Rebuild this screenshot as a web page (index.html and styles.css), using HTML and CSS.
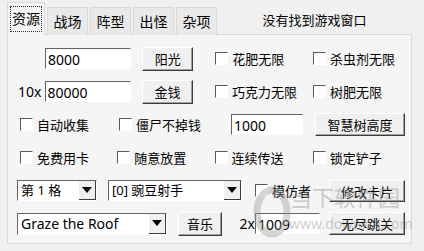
FILE: index.html
```html
<!DOCTYPE html>
<html lang="zh-CN">
<head>
    <meta charset="UTF-8">
    <meta name="viewport" content="width=device-width, initial-scale=1.0">
    <link rel="stylesheet" href="styles.css">
</head>
<body>

    <div class="window">
        <!-- Вкладки и статус -->
        <div class="topbar">
            <div class="tabs">
                <div class="tab active"><span class="focus">资源</span></div>
                <div class="tab">战场</div>
                <div class="tab">阵型</div>
                <div class="tab">出怪</div>
                <div class="tab">杂项</div>
            </div>
            <div class="status">没有找到游戏窗口</div>
        </div>

        <div class="panel">
            <div class="row">
                <div class="field f-money">8000</div>
                <div class="button b-small">阳光</div>
                <label class="check c-first"><span class="box"></span>花肥无限</label>
                <label class="check"><span class="box"></span>杀虫剂无限</label>
            </div>
            <div class="row">
                <span class="prefix p-10x">10x</span>
                <div class="field f-money">80000</div>
                <div class="button b-small">金钱</div>
                <label class="check c-first"><span class="box"></span>巧克力无限</label>
                <label class="check"><span class="box"></span>树肥无限</label>
            </div>
            <div class="row">
                <label class="check c-left"><span class="box"></span>自动收集</label>
                <label class="check c-left"><span class="box"></span>僵尸不掉钱</label>
                <div class="field f-tree">1000</div>
                <div class="button b-tree">智慧树高度</div>
            </div>
            <div class="row">
                <label class="check c-left"><span class="box"></span>免费用卡</label>
                <label class="check c-left"><span class="box"></span>随意放置</label>
                <label class="check"><span class="box"></span>连续传送</label>
                <label class="check"><span class="box"></span>锁定铲子</label>
            </div>
            <div class="row">
                <div class="combo cb-slot"><span class="value">第 1 格</span><span class="arrow"></span></div>
                <div class="combo cb-plant"><span class="value">[0] 豌豆射手</span><span class="arrow"></span></div>
                <label class="check c-imitate"><span class="box"></span>模仿者</label>
                <div class="button b-wide">修改卡片</div>
            </div>
            <div class="row">
                <div class="combo cb-music"><span class="value">Graze the Roof</span><span class="arrow"></span></div>
                <div class="button b-music">音乐</div>
                <span class="prefix p-2x">2x</span>
                <div class="field f-level">1009</div>
                <div class="button b-wide b-last">无尽跳关</div>
            </div>
        </div>

        <!-- Водяной знак -->
        <div class="watermark">
            <svg class="wm-logo" width="40" height="56" viewBox="0 0 40 56">
                <ellipse cx="20" cy="30" rx="15" ry="22" fill="none" stroke="#9a9a9a" stroke-width="7"/>
            </svg>
            <div class="wm-title">当下软件园</div>
            <div class="wm-url">www.downxia.com</div>
        </div>
    </div>

</body>
</html>
```

FILE: styles.css
```css
body {
    margin: 0;
    background-color: #f0f0f0;
    font-family: "Noto Sans", "Noto Sans CJK SC", sans-serif;
    font-size: 13px;
    color: #000;
}
.window {
    position: relative;
    width: 424px;
    height: 251px;
    padding: 3px 12px 0 7px;
    box-sizing: border-box;
}
/* Вкладки */
.topbar {
    display: flex;
    align-items: flex-end;
    height: 31px;
}
.tabs {
    display: flex;
    align-items: flex-end;
    gap: 2px;
    margin-bottom: -1px;
    position: relative;
    z-index: 2;
}
.tab {
    height: 27px;
    line-height: 27px;
    padding: 0 4px;
    width: 31px;
    text-align: center;
    background: #e9e9e9;
    border: 1px solid #dadada;
    border-bottom: none;
    font-size: 14px;
}
.tab.active {
    height: 32px;
    width: 32px;
    background: #f5f5f5;
    padding: 0 2px;
    display: flex;
    align-items: center;
    justify-content: center;
}
.tab .focus {
    display: block;
    line-height: 24px;
    padding: 0 1px;
    border: 1px dotted #333;
}
.status {
    flex: 1;
    align-self: center;
    text-align: center;
    padding-top: 2px;
}
/* Страница */
.panel {
    position: relative;
    height: 210px;
    border: 1px solid #d9d9d9;
    background: #f5f5f5;
    padding: 7px 0 0 9px;
    box-sizing: border-box;
}
.row {
    display: flex;
    align-items: center;
    height: 33px;
}
.field {
    height: 21px;
    line-height: 21px;
    padding-left: 2px;
    box-sizing: border-box;
    background: #fff;
    border: 1px solid;
    border-color: #646464 #fff #fff #646464;
    font-size: 14px;
}
.button {
    height: 24px;
    line-height: 22px;
    text-align: center;
    box-sizing: border-box;
    background: #f0f0f0;
    border: 1px solid;
    border-color: #fff #3c3c3c #3c3c3c #fff;
    box-shadow: inset -1px -1px #a0a0a0;
}
.check {
    display: flex;
    align-items: center;
    width: 100px;
}
.box {
    width: 11px;
    height: 11px;
    margin-right: 4px;
    background: #fff;
    border: 1px solid;
    border-color: #5a5a5a #fff #fff #5a5a5a;
}
.prefix {
    font-size: 14px;
    text-align: right;
}
.combo {
    display: flex;
    height: 21px;
    box-sizing: border-box;
    background: #fff;
    border: 1px solid;
    border-color: #646464 #fff #fff #646464;
}
.combo .value {
    flex: 1;
    padding-left: 3px;
    line-height: 19px;
    white-space: nowrap;
    overflow: hidden;
}
.combo .arrow {
    width: 16px;
    background: #f0f0f0;
    border-right: 1px solid #3c3c3c;
    border-bottom: 1px solid #3c3c3c;
    display: flex;
    align-items: center;
    justify-content: center;
}
.combo .arrow::after {
    content: "";
    border-left: 5px solid transparent;
    border-right: 5px solid transparent;
    border-top: 6px solid #000;
}
.cb-music .value {
    font-size: 14px;
}
/* Размеры и отступы элементов */
.f-money { width: 88px; }
.row > .f-money:first-child { margin-left: 28px; }
.p-10x { width: 25px; margin-right: 3px; }
.b-small { width: 52px; margin-left: 11px; }
.c-first { margin-left: 22px; }
.c-left { width: 99px; }
.row > .c-left:first-child { margin-left: 3px; }
.f-tree { width: 72px; margin-left: 13px; }
.b-tree { width: 90px; margin-left: 12px; height: 23px; }
.cb-slot { width: 80px; }
.cb-plant { width: 134px; margin-left: 11px; }
.c-imitate { width: 74px; margin-left: 13px; }
.b-wide { width: 76px; height: 22px; }
.cb-music { width: 150px; height: 22px; }
.b-music { width: 44px; margin-left: 11px; }
.p-2x { width: 18px; margin-left: 15px; }
.f-level { width: 65px; }
.b-last { margin-left: 9px; height: 23px; }
/* Водяной знак поверх окна */
.watermark {
    position: absolute;
    left: 252px;
    top: 176px;
    width: 160px;
    height: 70px;
    opacity: 0.4;
    pointer-events: none;
    color: #8a8a8a;
}
.wm-logo {
    position: absolute;
    left: 0;
    top: 6px;
}
.wm-title {
    position: absolute;
    left: 38px;
    top: 4px;
    font-size: 22px;
}
.wm-url {
    position: absolute;
    left: 37px;
    top: 38px;
    font-size: 14px;
}
```
